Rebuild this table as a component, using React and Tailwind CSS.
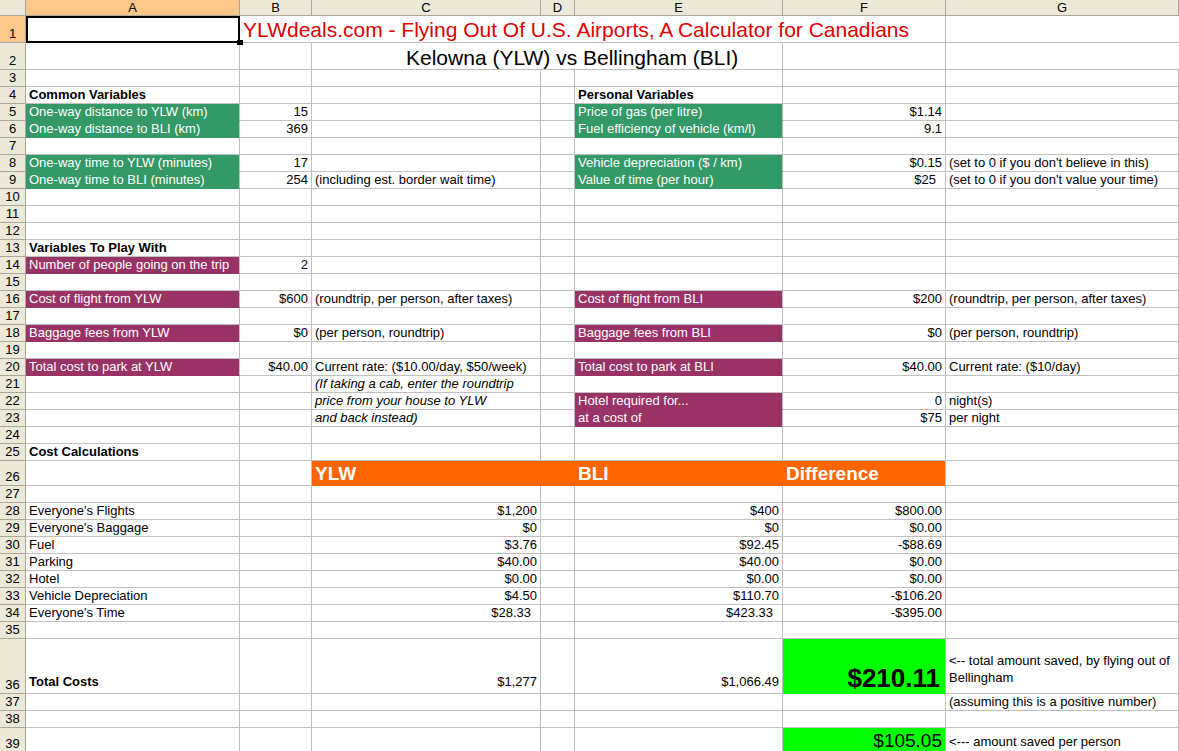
import React from 'react';

// Column template: row header, A, B, C, D, E, F, G
const COLS = 'grid grid-cols-[26px_214px_72px_229px_34px_208px_163px_1fr]';

const FILLS = {
    green: 'bg-[#339966] text-white border-b-[#339966]',
    purple: 'bg-[#993366] text-white border-b-[#993366]',
    orange: 'bg-[#ff6600] text-white border-r-[#ff6600] border-b-[#ff6600]',
    orangeEnd: 'bg-[#ff6600] text-white border-b-[#ff6600]',
    lime: 'bg-[#00ff00] border-b-[#00ff00]',
};

const LETTERS = ['A', 'B', 'C', 'D', 'E', 'F', 'G'];

// Shorthands for cell specs
const g = (t) => ({ t, fill: 'green' });
const p = (t) => ({ t, fill: 'purple' });
const n = (t, extra = {}) => ({ t, r: true, ...extra });
const b = (t) => ({ t, bold: true });
const it = (t) => ({ t, italic: true });

const rows = [
    { n: 3 },
    { n: 4, A: b('Common Variables'), E: b('Personal Variables') },
    { n: 5, A: g('One-way distance to YLW (km)'), B: n('15'), E: g('Price of gas (per litre)'), F: n('$1.14') },
    { n: 6, A: g('One-way distance to BLI (km)'), B: n('369'), E: g('Fuel efficiency of vehicle (km/l)'), F: n('9.1') },
    { n: 7 },
    { n: 8, A: g('One-way time to YLW (minutes)'), B: n('17'), E: g('Vehicle depreciation ($ / km)'), F: n('$0.15'), G: "(set to 0 if you don't believe in this)" },
    { n: 9, A: g('One-way time to BLI (minutes)'), B: n('254'), C: '(including est. border wait time)', E: g('Value of time (per hour)'), F: n('$25', { pr: true }), G: "(set to 0 if you don't value your time)" },
    { n: 10 },
    { n: 11 },
    { n: 12 },
    { n: 13, A: b('Variables To Play With') },
    { n: 14, A: p('Number of people going on the trip'), B: n('2') },
    { n: 15 },
    { n: 16, A: p('Cost of flight from YLW'), B: n('$600'), C: '(roundtrip, per person, after taxes)', E: p('Cost of flight from BLI'), F: n('$200'), G: '(roundtrip, per person, after taxes)' },
    { n: 17 },
    { n: 18, A: p('Baggage fees from YLW'), B: n('$0'), C: '(per person, roundtrip)', E: p('Baggage fees from BLI'), F: n('$0'), G: '(per person, roundtrip)' },
    { n: 19 },
    { n: 20, A: p('Total cost to park at YLW'), B: n('$40.00'), C: 'Current rate: ($10.00/day, $50/week)', E: p('Total cost to park at BLI'), F: n('$40.00'), G: 'Current rate: ($10/day)' },
    { n: 21, C: it('(If taking a cab, enter the roundtrip') },
    { n: 22, C: it('price from your house to YLW'), E: p('Hotel required for...'), F: n('0'), G: 'night(s)' },
    { n: 23, C: it('and back instead)'), E: p('at a cost of'), F: n('$75'), G: 'per night' },
    { n: 24 },
    { n: 25, A: b('Cost Calculations') },
    {
        n: 26, h: 'h-[25px]',
        C: { t: 'YLW', fill: 'orange', head: true },
        D: { t: '', fill: 'orange' },
        E: { t: 'BLI', fill: 'orange', head: true },
        F: { t: 'Difference', fill: 'orangeEnd', head: true },
    },
    { n: 27 },
    { n: 28, A: "Everyone's Flights", C: n('$1,200'), E: n('$400'), F: n('$800.00') },
    { n: 29, A: "Everyone's Baggage", C: n('$0'), E: n('$0'), F: n('$0.00') },
    { n: 30, A: 'Fuel', C: n('$3.76'), E: n('$92.45'), F: n('-$88.69') },
    { n: 31, A: 'Parking', C: n('$40.00'), E: n('$40.00'), F: n('$0.00') },
    { n: 32, A: 'Hotel', C: n('$0.00'), E: n('$0.00'), F: n('$0.00') },
    { n: 33, A: 'Vehicle Depreciation', C: n('$4.50'), E: n('$110.70'), F: n('-$106.20') },
    { n: 34, A: "Everyone's Time", C: n('$28.33', { pr: true }), E: n('$423.33', { pr: true }), F: n('-$395.00') },
    { n: 35 },
    {
        n: 36, h: 'h-[55px]', pb: 'pb-[4px]',
        A: b('Total Costs'), C: n('$1,277'), E: n('$1,066.49'),
        F: { t: '$210.11', r: true, fill: 'lime', big: true },
        G: { t: ['<-- total amount saved, by flying out of', 'Bellingham'], wrap: true },
    },
    { n: 37, G: '(assuming this is a positive number)' },
    { n: 38 },
    {
        n: 39, h: 'h-[25px]', pb: 'pb-[3px]',
        F: { t: '$105.05', r: true, fill: 'lime', mid: true },
        G: '<--- amount saved per person',
    },
];

const RowHead = ({ label, active }) => (
    <div
        className={`flex items-end justify-center border-r border-b border-[#aca899] pb-[1px] leading-[15px] text-black ${
            active ? 'bg-[#fbc78a]' : 'bg-[#ece9d8]'
        }`}
    >
        {label}
    </div>
);

const Cell = ({ c, pb }) => {
    if (c === undefined || c === null) {
        return <div className="border-r border-b border-[#c0c0c0]" />;
    }
    const spec = typeof c === 'string' ? { t: c } : c;
    const fill = spec.fill ? FILLS[spec.fill] : 'text-black';

    let textCls = `${pb || 'pb-[1px]'} leading-[15px]`;
    if (spec.head) textCls = 'pb-0 leading-[22px] text-[19px] font-bold';
    if (spec.big) textCls = 'pb-[1px] leading-[28px] text-[26px] font-bold';
    if (spec.mid) textCls = 'pb-0 leading-[22px] text-[19px]';
    if (spec.wrap) textCls = 'pb-[7px] leading-[17px]';

    return (
        <div
            className={`flex items-end whitespace-nowrap border-r border-b border-[#c0c0c0] pl-[3px] ${
                spec.pr ? 'pr-[9px]' : spec.big ? 'pr-[5px]' : 'pr-[3px]'
            } ${spec.r ? 'justify-end' : 'justify-start'} ${fill} ${textCls} ${spec.bold ? 'font-bold' : ''} ${
                spec.italic ? 'italic' : ''
            }`}
        >
            {spec.wrap ? (
                <span>
                    {spec.t[0]}
                    <br />
                    {spec.t[1]}
                </span>
            ) : (
                spec.t
            )}
        </div>
    );
};

export default function App() {
    return (
        <div className="h-[751px] w-[1179px] overflow-hidden bg-white font-['Liberation_Sans',Arial,sans-serif] text-[13px]">
            {/* Column headers */}
            <div className={`${COLS} h-[16px]`}>
                <div className="border-r border-b border-[#aca899] bg-[#ece9d8]" />
                {LETTERS.map((l) => (
                    <div
                        key={l}
                        className={`flex items-end justify-center border-r border-b border-[#aca899] leading-[15px] ${
                            l === 'A' ? 'bg-[#fbc78a]' : 'bg-[#ece9d8]'
                        }`}
                    >
                        {l}
                    </div>
                ))}
            </div>

            {/* Row 1: title, A1 selected */}
            <div className={`${COLS} h-[27px]`}>
                <RowHead label="1" active />
                <div className="relative border-r border-b border-[#c0c0c0]">
                    <div className="absolute top-0 left-0 right-[-1px] bottom-[-1px] border-2 border-black" />
                    <div className="absolute right-[-4px] bottom-[-3px] h-[5px] w-[6px] bg-black" />
                </div>
                <div className="col-span-5 flex items-end border-r border-b border-[#c0c0c0] pl-[3px] pb-0 text-[21px] leading-[24px] text-[#e00000] whitespace-nowrap">
                    YLWdeals.com - Flying Out Of U.S. Airports, A Calculator for Canadians
                </div>
                <div className="border-b border-[#c0c0c0]" />
            </div>

            {/* Row 2: subtitle merged across C:E */}
            <div className={`${COLS} h-[27px]`}>
                <RowHead label="2" />
                <div className="border-r border-b border-[#c0c0c0]" />
                <div className="border-r border-b border-[#c0c0c0]" />
                <div className="col-span-3 flex items-end border-r border-b border-[#c0c0c0] pl-[94px] pb-0 text-[21px] leading-[23px] text-black whitespace-nowrap">
                    Kelowna (YLW) vs Bellingham (BLI)
                </div>
                <div className="border-r border-b border-[#c0c0c0]" />
                <div className="border-b border-[#c0c0c0]" />
            </div>

            {rows.map((row) => (
                <div key={row.n} className={`${COLS} ${row.h || 'h-[17px]'}`}>
                    <RowHead label={row.n} />
                    {LETTERS.map((l) => (
                        <Cell key={l} c={row[l]} pb={row.pb} />
                    ))}
                </div>
            ))}
        </div>
    );
}
